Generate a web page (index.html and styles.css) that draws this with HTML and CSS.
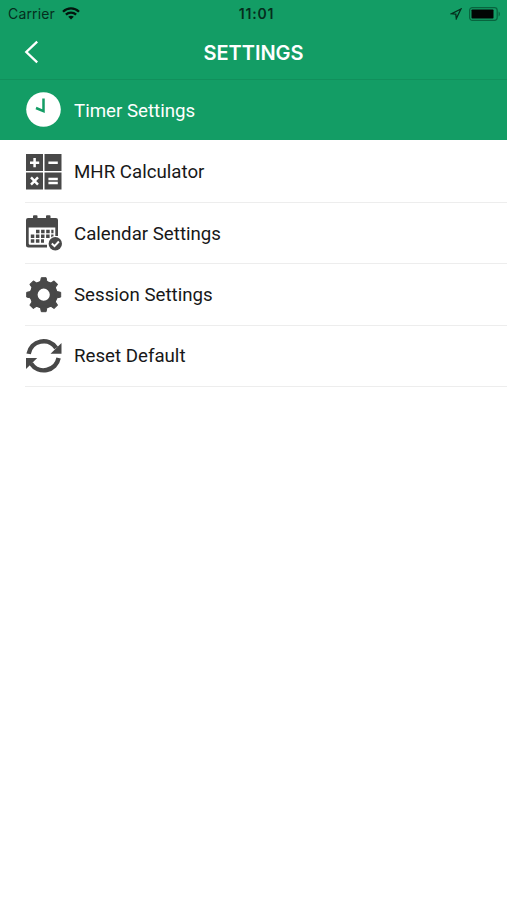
FILE: index.html
```html
<!DOCTYPE html>
<html lang="en">
<head>
<meta charset="utf-8">
<title>Settings</title>
<link rel="stylesheet" href="styles.css">
</head>
<body>
<header class="header">
  <div class="status">
    <div class="status-left">
      <span class="carrier">Carrier</span>
      <svg class="wifi" width="18" height="13" viewBox="0 0 18 13">
        <g fill="none" stroke="currentColor" stroke-width="2.3">
          <path d="M1 4.7C5.5.3 12.500.3 17 4.7"/>
          <path d="M3.900 7.700C6.700 5 11.300 5 14.100 7.700"/>
        </g>
        <path d="M6.200 9.700C7.800 8.300 10.200 8.300 11.800 9.700L9 12.500Z" fill="currentColor"/>
      </svg>
    </div>
    <span class="time">11:01</span>
    <div class="status-right">
      <svg width="12" height="12" viewBox="0 0 12 12"><path d="M10.900 1L1.300 5.800L5.800 6.200L6.300 10.600Z" fill="none" stroke="currentColor" stroke-width="1.300"/></svg>
      <svg width="32" height="14" viewBox="0 0 32 14">
        <rect x=".6" y=".6" width="27.600" height="12.800" rx="2.800" fill="none" stroke="#08643e" stroke-width="1.200"/>
        <rect x="2.500" y="2.500" width="22" height="9" rx=".8" fill="#020504"/>
        <path d="M29.600 4.500C31.300 5.200 31.300 8.800 29.600 9.500Z" fill="#08643e"/>
      </svg>
    </div>
  </div>
  <nav class="navbar">
    <svg class="back" width="16" height="24" viewBox="0 0 16 24"><path d="M13.200 1.600L2.300 12L13.200 22.400" fill="none" stroke="currentColor" stroke-width="2.300"/></svg>
    <h1 class="title">SETTINGS</h1>
  </nav>
</header>
<main class="menu">
  <div class="row active">
    <svg class="icon" viewBox="0 0 36 36"><circle cx="17.500" cy="17.500" r="17.300" fill="#fff"/><path d="M17.500 6.500V19.200L10 16" fill="none" stroke="#139d65" stroke-width="2.500"/></svg>
    <span class="label">Timer Settings</span>
  </div>
  <div class="row">
    <svg class="icon" viewBox="0 0 36 36">
      <path d="M0 0H17V17H0ZM18.500 0H35.500V17H18.500ZM0 18.500H17V35.500H0ZM18.500 18.500H35.500V35.500H18.500Z" fill="currentColor"/>
      <path d="M4 8.700H13.200M8.600 4.100V13.300M22.400 8.700H31.800M5 23.400L12 30.600M12 23.400L5 30.600M22.400 25.100H31.800M22.400 29.100H31.800" stroke="#fff" stroke-width="2.500"/>
    </svg>
    <span class="label">MHR Calculator</span>
  </div>
  <div class="row">
    <svg class="icon" viewBox="0 0 36 36">
      <path d="M2 3H7V1Q7 .2 8 .2H10.500Q11.500.2 11.500 1V3H20V1Q20 .2 21 .2H23.500Q24.500.2 24.500 1V3H30Q32 3 32 5V21H29.300V12.500H2.700V28.500Q2.700 29.800 4 29.800H21V32.500H2.500Q0 32.500 0 30V5Q0 3 2 3Z" fill="currentColor"/>
      <path d="M10 16.500H27.500M4.800 21.200H27.500M4.800 25.900H18" fill="none" stroke="currentColor" stroke-width="3.500" stroke-dasharray="3.500 1.600"/>
      <circle cx="29.300" cy="28.800" r="7.700" fill="#fff"/>
      <circle cx="29.300" cy="28.800" r="6.700" fill="currentColor"/>
      <path d="M25.800 28.500L28.500 31.100L32.900 26.500" fill="none" stroke="#fff" stroke-width="2"/>
    </svg>
    <span class="label">Calendar Settings</span>
  </div>
  <div class="row">
    <svg class="icon" viewBox="0 0 36 36">
      <circle cx="17.700" cy="17.700" r="10" fill="none" stroke="currentColor" stroke-width="7.800"/>
      <g fill="currentColor" stroke="currentColor" stroke-width="1" stroke-linejoin="round">
        <path id="tooth" d="M15.300 .7H20.100L20.800 4.200L23 6H12.400L14.600 4.200Z"/>
        <use href="#tooth" transform="rotate(45 17.700 17.700)"/>
        <use href="#tooth" transform="rotate(90 17.700 17.700)"/>
        <use href="#tooth" transform="rotate(135 17.700 17.700)"/>
        <use href="#tooth" transform="rotate(180 17.700 17.700)"/>
        <use href="#tooth" transform="rotate(225 17.700 17.700)"/>
        <use href="#tooth" transform="rotate(270 17.700 17.700)"/>
        <use href="#tooth" transform="rotate(315 17.700 17.700)"/>
      </g>
    </svg>
    <span class="label">Session Settings</span>
  </div>
  <div class="row">
    <svg class="icon" viewBox="0 0 36 36">
      <path d="M2.600 15.800A15.200 15.200 0 0 1 30.200 10M32.600 20A15.200 15.200 0 0 1 5 25.500" fill="none" stroke="currentColor" stroke-width="4.500"/>
      <path d="M35.500 5V15.700H24.500ZM0 20H11.200L0 31Z" fill="currentColor"/>
    </svg>
    <span class="label">Reset Default</span>
  </div>
</main>
</body>
</html>
```

FILE: styles.css
```css
* { box-sizing: border-box; }
body {
  margin: 0;
  background: #fff;
  color: #181818;
  font-family: Roboto, "Liberation Sans", sans-serif;
}
svg { display: block; flex: none; }
.header {
  height: 80px;
  background: #139d65;
  border-bottom: 1px solid #11905c;
}
.status {
  display: grid;
  grid-template-columns: 1fr auto 1fr;
  align-items: center;
  height: 27px;
  padding: 0 6px 0 8px;
  color: #052e1d;
  font: 14px/27px Inter, sans-serif;
}
.status-left, .status-right { display: flex; align-items: center; }
.status-left { gap: 7px; }
.carrier { letter-spacing: 0.15px; }
.wifi { color: #03150d; }
.time { font-weight: 600; letter-spacing: 0.8px; padding-left: 4px; }
.status-right { justify-content: flex-end; gap: 7px; }
.navbar {
  display: grid;
  grid-template-columns: 44px 1fr 44px;
  align-items: center;
  height: 50px;
  color: #fff;
}
.back { margin-left: 24px; }
.title {
  margin: 0;
  padding-top: 1px;
  text-align: center;
  font: 600 20px/24px Inter, sans-serif;
}
.row {
  display: flex;
  align-items: center;
  gap: 12px;
  height: 61.4px;
  margin-left: 25px;
  padding-left: 1px;
  border-bottom: 1px solid #ededed;
}
.active {
  height: 60px;
  margin: 0 0 1px;
  padding-left: 26px;
  background: #139d65;
  border: 0;
  color: #fff;
}
.active + .row { height: 62px; }
.icon { width: 36px; height: 36px; color: #484848; }
.label { padding-top: 1px; font-size: 18.7px; line-height: 24px; }
```
